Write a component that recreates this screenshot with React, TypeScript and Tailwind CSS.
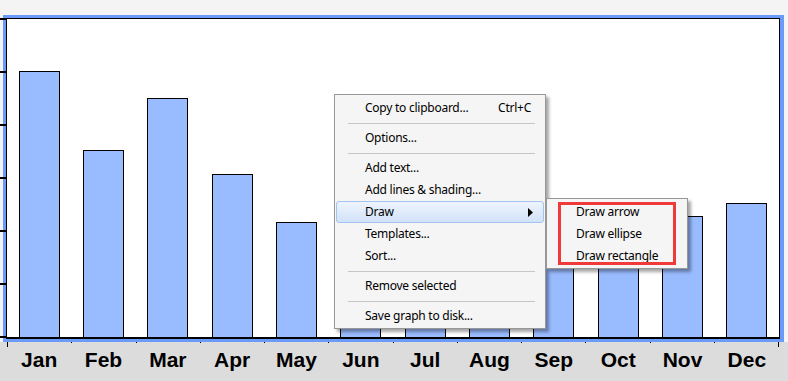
import { Fragment } from 'react';

const months = ['Jan', 'Feb', 'Mar', 'Apr', 'May', 'Jun', 'Jul', 'Aug', 'Sep', 'Oct', 'Nov', 'Dec'];
// bar heights in px, measured from the plot floor
const values = [266, 187, 239, 163, 115, 85, 160, 190, 100, 110, 121, 134];

type Item = { label: string; shortcut?: string; sub?: boolean; active?: boolean } | 'sep';

const menuItems: Item[] = [
  { label: 'Copy to clipboard...', shortcut: 'Ctrl+C' },
  'sep',
  { label: 'Options...' },
  'sep',
  { label: 'Add text...' },
  { label: 'Add lines & shading...' },
  { label: 'Draw', sub: true, active: true },
  { label: 'Templates...' },
  { label: 'Sort...' },
  'sep',
  { label: 'Remove selected' },
  'sep',
  { label: 'Save graph to disk...' },
];

const drawItems = ['Draw arrow', 'Draw ellipse', 'Draw rectangle'];

const MenuRow = ({ item }: { item: Exclude<Item, 'sep'> }) => (
  <div
    className={`h-[22px] flex items-center pl-[28px] pr-[12px] rounded-[3px] border ${
      item.active
        ? 'border-[#a4c3ee] bg-gradient-to-b from-[#eef4fd] to-[#d2e2f8]'
        : 'border-transparent'
    }`}
  >
    <span className="flex-1">{item.label}</span>
    {item.shortcut && <span>{item.shortcut}</span>}
    {item.sub && (
      <svg width="5" height="9" viewBox="0 0 5 9" className="mr-[-2px]">
        <polygon points="0,0 5,4.5 0,9" fill="#000" />
      </svg>
    )}
  </div>
);

const Separator = () => (
  <div className="h-[8px] flex items-center pl-[12px] pr-[9px]">
    <div className="h-px w-full bg-[#c5c5c5]" />
  </div>
);

const App = () => {
  return (
    <div className="w-[788px] h-[381px] overflow-hidden relative bg-[#f4f4f4] font-['Liberation_Sans',Arial,sans-serif]">
      <div className="h-[15px]" />

      {/* chart frame */}
      <div className="relative">
        <div className="ml-[3px] w-[781px] h-[327px] border-[3px] border-r-[4px] border-[#6a9bf8] bg-white">
          <div className="h-full border border-b-2 border-black grid grid-cols-12">
            {values.map((v, i) => (
              <div key={i} className="flex items-end justify-center">
                <div className="w-[41px] border border-b-0 border-black bg-[#99bbff]" style={{ height: v }} />
              </div>
            ))}
          </div>
        </div>
        {/* y axis ticks */}
        <div className="absolute left-0 top-[3px] h-[320px] w-[6px] flex flex-col justify-between">
          {Array.from({ length: 7 }).map((_, i) => (
            <div key={i} className="h-[2px] bg-black" />
          ))}
        </div>
      </div>

      {/* x axis */}
      <div className="h-[39px] bg-[#dcdcdc]">
        <div className="ml-[7px] w-[772px] h-[5px] flex justify-between items-start">
          {Array.from({ length: 13 }).map((_, i) => (
            <div key={i} className={`w-px bg-black ${i === 0 || i === 12 ? 'h-[5px]' : 'h-px'}`} />
          ))}
        </div>
        <div className="ml-[7px] w-[772px] grid grid-cols-12 pt-[2px]">
          {months.map((m) => (
            <div key={m} className="text-center text-[21px] leading-[21px] font-bold text-black">
              {m}
            </div>
          ))}
        </div>
      </div>

      {/* context menu */}
      <div className="absolute left-[334px] top-[94px] w-[212px] bg-[#f5f5f5] border border-[#979797] px-px pt-[2px] pb-px shadow-[3px_3px_3px_rgba(0,0,0,0.35)] font-['Noto_Sans',sans-serif] text-[12px] tracking-[-0.25px] text-black">
        {menuItems.map((item, i) => (
          <Fragment key={i}>{item === 'sep' ? <Separator /> : <MenuRow item={item} />}</Fragment>
        ))}
      </div>

      {/* submenu */}
      <div className="absolute left-[546px] top-[198px] w-[142px] bg-[#f5f5f5] border border-[#979797] px-px pt-[2px] pb-px shadow-[3px_3px_3px_rgba(0,0,0,0.35)] font-['Noto_Sans',sans-serif] text-[12px] tracking-[-0.25px] text-black">
        {drawItems.map((d) => (
          <div key={d} className="h-[22px] flex items-center pl-[28px]">
            {d}
          </div>
        ))}
        <div className="absolute left-[11px] top-[3px] w-[118px] h-[63px] border-[3px] border-[#f03a3a]" />
      </div>
    </div>
  );
};

export default App;
